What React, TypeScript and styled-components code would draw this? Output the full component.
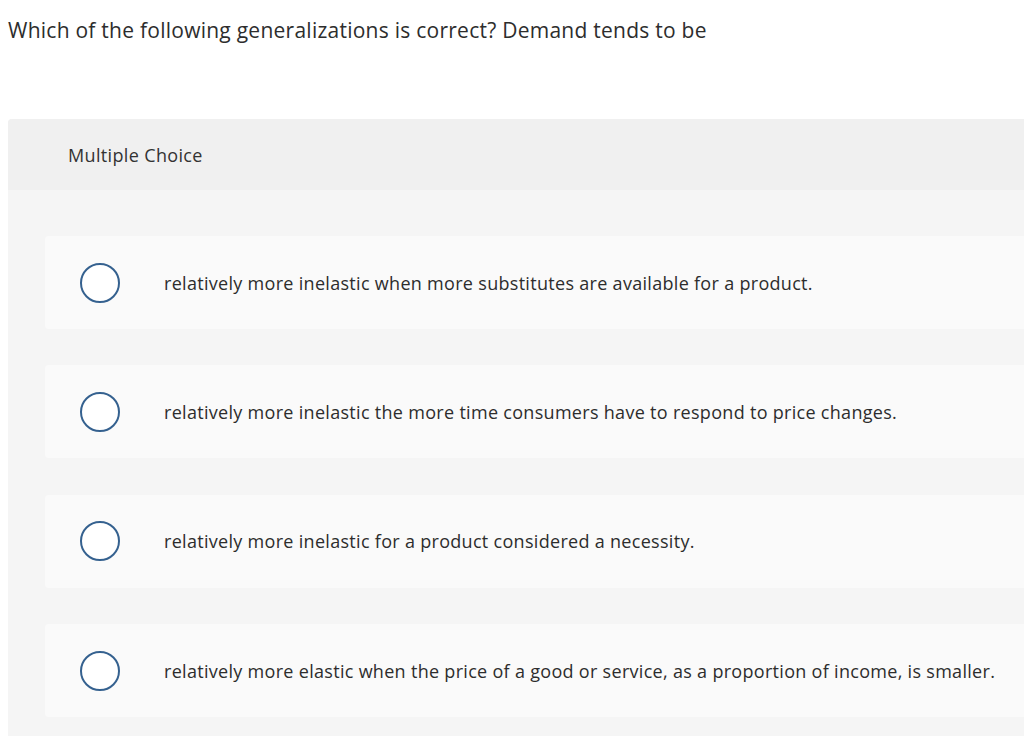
import React from 'react'
import styled, { createGlobalStyle } from 'styled-components'

const GlobalStyle = createGlobalStyle`
  html, body {
    margin: 0;
    padding: 0;
    background: #ffffff;
    overflow: hidden;
  }
  body {
    font-family: "Open Sans", Lato, Arial, sans-serif;
    color: #333333;
  }
`

const Page = styled.div`
  box-sizing: border-box;
  width: 1024px;
  padding-left: 8px;
`

const Prompt = styled.div`
  padding-top: 18px;
  font-size: 21px;
  line-height: 24px;
  letter-spacing: 0.25px;
  color: #2d2d2d;
`

const Panel = styled.section`
  margin-top: 77px;
  border-radius: 4px 0 0 0;
  background: #f5f5f5;
  overflow: hidden;
`

const PanelHeader = styled.div`
  height: 71px;
  display: flex;
  align-items: center;
  padding-left: 60px;
  background: #f0f0f0;
  font-size: 18px;
  letter-spacing: 0.35px;
  color: #333333;
`

const ChoiceList = styled.div`
  display: flex;
  flex-direction: column;
  gap: 36.4px;
  padding: 46px 0 30px 37px;
`

const Choice = styled.label`
  height: 93px;
  display: flex;
  align-items: center;
  background: #fafafa;
  border-radius: 4px 0 0 4px;
  padding-left: 35px;
  cursor: pointer;
`

const Radio = styled.span`
  width: 36px;
  height: 36px;
  flex: none;
  border: 2px solid #35618f;
  border-radius: 50%;
  background: #ffffff;
`

const ChoiceText = styled.span`
  margin-left: 44px;
  font-size: 18px;
  line-height: 22px;
  letter-spacing: 0.3px;
  color: #2d2d2d;
  white-space: nowrap;
`

const choices = [
  'relatively more inelastic when more substitutes are available for a product.',
  'relatively more inelastic the more time consumers have to respond to price changes.',
  'relatively more inelastic for a product considered a necessity.',
  'relatively more elastic when the price of a good or service, as a proportion of income, is smaller.',
]

export default function App() {
  return (
    <>
      <GlobalStyle />
      <Page>
        <Prompt>Which of the following generalizations is correct? Demand tends to be</Prompt>
        <Panel>
          <PanelHeader>Multiple Choice</PanelHeader>
          <ChoiceList>
            {choices.map((text) => (
              <Choice key={text}>
                <Radio />
                <ChoiceText>{text}</ChoiceText>
              </Choice>
            ))}
          </ChoiceList>
        </Panel>
      </Page>
    </>
  )
}
